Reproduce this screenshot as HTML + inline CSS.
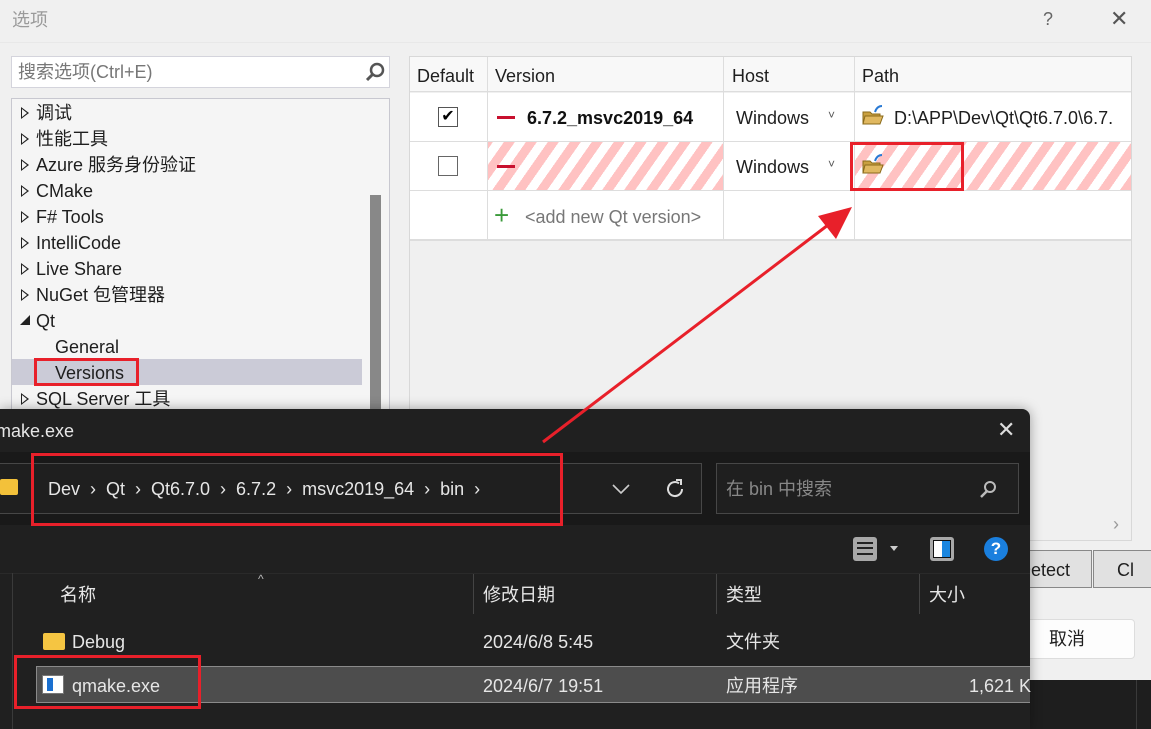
<!DOCTYPE html>
<html><head><meta charset="utf-8"><style>
*{margin:0;padding:0;box-sizing:border-box}
body{width:1151px;height:729px;overflow:hidden;position:relative;background:#f0f0f0;font-family:"Liberation Sans","Noto Sans CJK SC",sans-serif;}
.a{position:absolute}
.t{font-size:18px;color:#1e1e1e;white-space:nowrap;line-height:22px;height:22px}
.tri{position:absolute;width:0;height:0;border-top:6px solid transparent;border-bottom:6px solid transparent;border-left:8px solid #222}
.tri:after{content:"";position:absolute;left:-7px;top:-4px;border-top:4px solid transparent;border-bottom:4px solid transparent;border-left:5px solid #f5f5f5}
.stripe{background:repeating-linear-gradient(-55deg,#ffc2c2 0 9px,#fff 9px 18px)}
.red{position:absolute;border:3px solid #e8202a}
.d{color:#e6e6e6;font-size:18px;white-space:nowrap;position:absolute;line-height:22px;height:22px}
</style></head><body>
<div class="a t" style="left:12px;top:9px;color:#9a9a9a">选项</div>
<div class="a" style="left:1043px;top:9px;font-size:18px;color:#666">?</div>
<div class="a" style="left:1110px;top:6px;font-size:22px;color:#555">✕</div>
<div class="a" style="left:0;top:42px;width:1151px;height:1px;background:#e8e8e8"></div>
<!-- search -->
<div class="a" style="left:11px;top:56px;width:379px;height:32px;background:#fff;border:1px solid #d4d4dc"></div>
<div class="a t" style="left:18px;top:61px;color:#777">搜索选项(Ctrl+E)</div>
<svg class="a" style="left:364px;top:61px" width="22" height="22"><circle cx="13" cy="9" r="6" fill="none" stroke="#555" stroke-width="2.5"/><line x1="9" y1="13" x2="3" y2="19" stroke="#555" stroke-width="3"/></svg>
<!-- tree -->
<div class="a" style="left:11px;top:98px;width:379px;height:320px;background:#f5f5f5;border:1px solid #c8c8d0"></div>
<div class="a" style="left:370px;top:195px;width:11px;height:220px;background:#888"></div>
<div class="a" style="left:12px;top:359px;width:350px;height:26px;background:#cbcbd7"></div>
<div class="a" style="left:0;top:0">
<div class="tri" style="left:21px;top:107px"></div><div class="a t" style="left:36px;top:102px">调试</div>
<div class="tri" style="left:21px;top:133px"></div><div class="a t" style="left:36px;top:128px">性能工具</div>
<div class="tri" style="left:21px;top:159px"></div><div class="a t" style="left:36px;top:154px">Azure 服务身份验证</div>
<div class="tri" style="left:21px;top:185px"></div><div class="a t" style="left:36px;top:180px">CMake</div>
<div class="tri" style="left:21px;top:211px"></div><div class="a t" style="left:36px;top:206px">F# Tools</div>
<div class="tri" style="left:21px;top:237px"></div><div class="a t" style="left:36px;top:232px">IntelliCode</div>
<div class="tri" style="left:21px;top:263px"></div><div class="a t" style="left:36px;top:258px">Live Share</div>
<div class="tri" style="left:21px;top:289px"></div><div class="a t" style="left:36px;top:284px">NuGet 包管理器</div>
<svg class="a" style="left:19px;top:314px" width="12" height="12"><polygon points="11,1 11,11 1,11" fill="#222"/></svg><div class="a t" style="left:36px;top:310px">Qt</div>
<div class="a t" style="left:55px;top:336px">General</div>
<div class="a t" style="left:55px;top:362px">Versions</div>
<div class="tri" style="left:21px;top:393px"></div><div class="a t" style="left:36px;top:388px">SQL Server 工具</div>
</div>
<div class="red" style="left:34px;top:358px;width:105px;height:28px"></div>
<!-- table -->
<div class="a" style="left:409px;top:56px;width:723px;height:485px;background:#f0f0f0;border:1px solid #d8d8d8"></div>
<div class="a" style="left:410px;top:57px;width:721px;height:35px;background:#f8f8f8;border-bottom:1px solid #ddd"></div>
<div class="a" style="left:410px;top:93px;width:721px;height:147px;background:#fff"></div>
<div class="a stripe" style="left:488px;top:142px;width:235px;height:48px"></div>
<div class="a stripe" style="left:855px;top:142px;width:276px;height:48px"></div>
<div class="a" style="left:410px;top:141px;width:721px;height:1px;background:#ddd"></div>
<div class="a" style="left:410px;top:190px;width:721px;height:1px;background:#ddd"></div>
<div class="a" style="left:410px;top:239px;width:721px;height:2px;background:#ddd"></div>
<div class="a" style="left:487px;top:57px;width:1px;height:183px;background:#ddd"></div>
<div class="a" style="left:723px;top:57px;width:1px;height:183px;background:#ddd"></div>
<div class="a" style="left:854px;top:57px;width:1px;height:183px;background:#ddd"></div>
<div class="a t" style="left:417px;top:65px">Default</div>
<div class="a t" style="left:495px;top:65px">Version</div>
<div class="a t" style="left:732px;top:65px">Host</div>
<div class="a t" style="left:862px;top:65px">Path</div>
<div class="a" style="left:438px;top:107px;width:20px;height:20px;border:1px solid #555;background:#fff;font-size:16px;line-height:18px;text-align:center">✔</div>
<div class="a" style="left:438px;top:156px;width:20px;height:20px;border:1px solid #666;background:#fff"></div>
<div class="a" style="left:497px;top:116px;width:18px;height:3px;background:#c8102e"></div>
<div class="a" style="left:497px;top:165px;width:18px;height:3px;background:#c8102e"></div>
<div class="a t" style="left:527px;top:107px;font-weight:bold;color:#111">6.7.2_msvc2019_64</div>
<div class="a t" style="left:736px;top:107px">Windows</div><div class="a" style="left:828px;top:108px;font-size:12px;color:#555">˅</div>
<div class="a t" style="left:736px;top:156px">Windows</div><div class="a" style="left:828px;top:157px;font-size:12px;color:#555">˅</div>
<svg class="a" style="left:861px;top:104px" width="24" height="22"><path d="M2 8h7l2 2h8v10H2z" fill="#c9a040" stroke="#8a6a1a"/><path d="M4 12h18l-3 8H2z" fill="#e0b860" stroke="#8a6a1a"/><path d="M14 8 q2-6 7-6" fill="none" stroke="#2a7ad4" stroke-width="2"/></svg>
<svg class="a" style="left:861px;top:153px" width="24" height="22"><path d="M2 8h7l2 2h8v10H2z" fill="#c9a040" stroke="#8a6a1a"/><path d="M4 12h18l-3 8H2z" fill="#e0b860" stroke="#8a6a1a"/><path d="M14 8 q2-6 7-6" fill="none" stroke="#2a7ad4" stroke-width="2"/></svg>
<div class="a t" style="left:894px;top:107px">D:\APP\Dev\Qt\Qt6.7.0\6.7.</div>
<div class="a" style="left:494px;top:203px;font-size:26px;color:#3a9a3a;line-height:24px">+</div>
<div class="a t" style="left:525px;top:206px;color:#777">&lt;add new Qt version&gt;</div>
<div class="red" style="left:850px;top:142px;width:114px;height:49px"></div>
<div class="a" style="left:1113px;top:514px;font-size:18px;color:#999">›</div>
<!-- buttons -->
<div class="a" style="left:1020px;top:550px;width:72px;height:38px;background:#e1e1e1;border:1px solid #888;border-left:none"></div>
<div class="a t" style="left:1018px;top:559px">Detect</div>
<div class="a" style="left:1093px;top:550px;width:58px;height:38px;background:#e1e1e1;border:1px solid #888;border-right:none"></div>
<div class="a t" style="left:1117px;top:559px">Cl</div>
<div class="a" style="left:1000px;top:619px;width:135px;height:40px;background:#fdfdfd;border:1px solid #ddd;border-radius:4px"></div>
<div class="a t" style="left:1049px;top:628px">取消</div>
<div class="a" style="left:1030px;top:680px;width:121px;height:49px;background:#1e1e1e"></div>
<div class="a" style="left:1136px;top:680px;width:1px;height:49px;background:#3a3a3a"></div>
<!-- dark dialog -->
<div class="a" style="left:0;top:409px;width:1030px;height:320px;background:#202020;border-radius:0 8px 0 0;box-shadow:0 0 12px rgba(0,0,0,.35)"></div>
<div class="d" style="left:-4px;top:420px">make.exe</div>
<div class="a" style="left:997px;top:417px;font-size:22px;color:#ddd">✕</div>
<div class="a" style="left:0;top:452px;width:1030px;height:73px;background:#191919"></div>
<div class="a" style="left:-2px;top:463px;width:704px;height:51px;border:1px solid #474747;background:#1f1f1f"></div>
<div class="a" style="left:0;top:479px;width:18px;height:16px;background:#f3c13a;border-radius:2px"></div>
<div class="d" style="left:48px;top:478px">Dev &nbsp;›&nbsp; Qt &nbsp;›&nbsp; Qt6.7.0 &nbsp;›&nbsp; 6.7.2 &nbsp;›&nbsp; msvc2019_64 &nbsp;›&nbsp; bin &nbsp;›</div>
<svg class="a" style="left:610px;top:481px" width="22" height="16"><path d="M3 4l8 8 8-8" fill="none" stroke="#ccc" stroke-width="1.6"/></svg>
<svg class="a" style="left:663px;top:477px" width="24" height="24"><path d="M19 12a7 7 0 1 1-3-5.7" fill="none" stroke="#ddd" stroke-width="2"/><path d="M13 3h5v5" fill="none" stroke="#ddd" stroke-width="2"/></svg>
<div class="a" style="left:716px;top:463px;width:303px;height:51px;border:1px solid #474747;background:#1f1f1f"></div>
<div class="d" style="left:726px;top:478px;color:#888">在 bin 中搜索</div>
<svg class="a" style="left:978px;top:479px" width="20" height="20"><circle cx="12" cy="8" r="5" fill="none" stroke="#bbb" stroke-width="2"/><line x1="9" y1="12" x2="3" y2="18" stroke="#bbb" stroke-width="2.5"/></svg>
<div class="a" style="left:853px;top:537px;width:24px;height:24px;background:#a8a8a8;border-radius:3px"></div>
<div class="a" style="left:857px;top:542px;width:16px;height:13px;border-top:2px solid #222;border-bottom:2px solid #222"></div>
<div class="a" style="left:857px;top:547px;width:16px;height:3px;border-top:2px solid #222"></div>
<div class="a" style="left:890px;top:546px;border-left:4px solid transparent;border-right:4px solid transparent;border-top:5px solid #ccc"></div>
<div class="a" style="left:930px;top:537px;width:24px;height:24px;background:#a8a8a8;border-radius:3px;padding:3px"><div style="width:18px;height:18px;background:linear-gradient(90deg,#fff 50%,#1a86e0 50%);border:1px solid #111"></div></div>
<div class="a" style="left:984px;top:537px;width:24px;height:24px;background:#1a7fde;border-radius:50%;color:#fff;font-size:17px;text-align:center;line-height:24px;font-weight:bold">?</div>
<div class="a" style="left:0;top:573px;width:1030px;height:1px;background:#2a2a2a"></div>
<div class="a" style="left:12px;top:573px;width:1px;height:156px;background:#3a3a3a"></div>
<div class="a" style="left:258px;top:572px;font-size:12px;color:#bbb">^</div>
<div class="d" style="left:60px;top:584px">名称</div>
<div class="a" style="left:473px;top:574px;width:1px;height:40px;background:#444"></div>
<div class="d" style="left:483px;top:584px">修改日期</div>
<div class="a" style="left:716px;top:574px;width:1px;height:40px;background:#444"></div>
<div class="d" style="left:726px;top:584px">类型</div>
<div class="a" style="left:919px;top:574px;width:1px;height:40px;background:#444"></div>
<div class="d" style="left:929px;top:584px">大小</div>
<div class="a" style="left:43px;top:633px;width:22px;height:17px;background:#f5c542;border-radius:2px"></div>
<div class="d" style="left:72px;top:631px">Debug</div>
<div class="d" style="left:483px;top:631px">2024/6/8 5:45</div>
<div class="d" style="left:726px;top:631px">文件夹</div>
<div class="a" style="left:36px;top:666px;width:994px;height:37px;background:#4d4d4d;border:1px solid #8a8a8a;border-right:none"></div>
<div class="a" style="left:42px;top:675px;width:22px;height:19px;background:#fff;border:1px solid #777"><div style="margin:2px 0 0 4px;width:6px;height:13px;background:#1a70d0"></div></div>
<div class="d" style="left:72px;top:675px">qmake.exe</div>
<div class="d" style="left:483px;top:675px">2024/6/7 19:51</div>
<div class="d" style="left:726px;top:675px">应用程序</div>
<div class="d" style="left:969px;top:675px">1,621 K</div>
<div class="red" style="left:31px;top:453px;width:532px;height:73px"></div>
<div class="red" style="left:14px;top:655px;width:187px;height:54px"></div>
<svg class="a" style="left:0;top:0" width="1151" height="729"><line x1="543" y1="442" x2="828" y2="225" stroke="#e8202a" stroke-width="3"/><polygon points="852,207 818,216 836,239" fill="#e8202a"/></svg>
</body></html>
